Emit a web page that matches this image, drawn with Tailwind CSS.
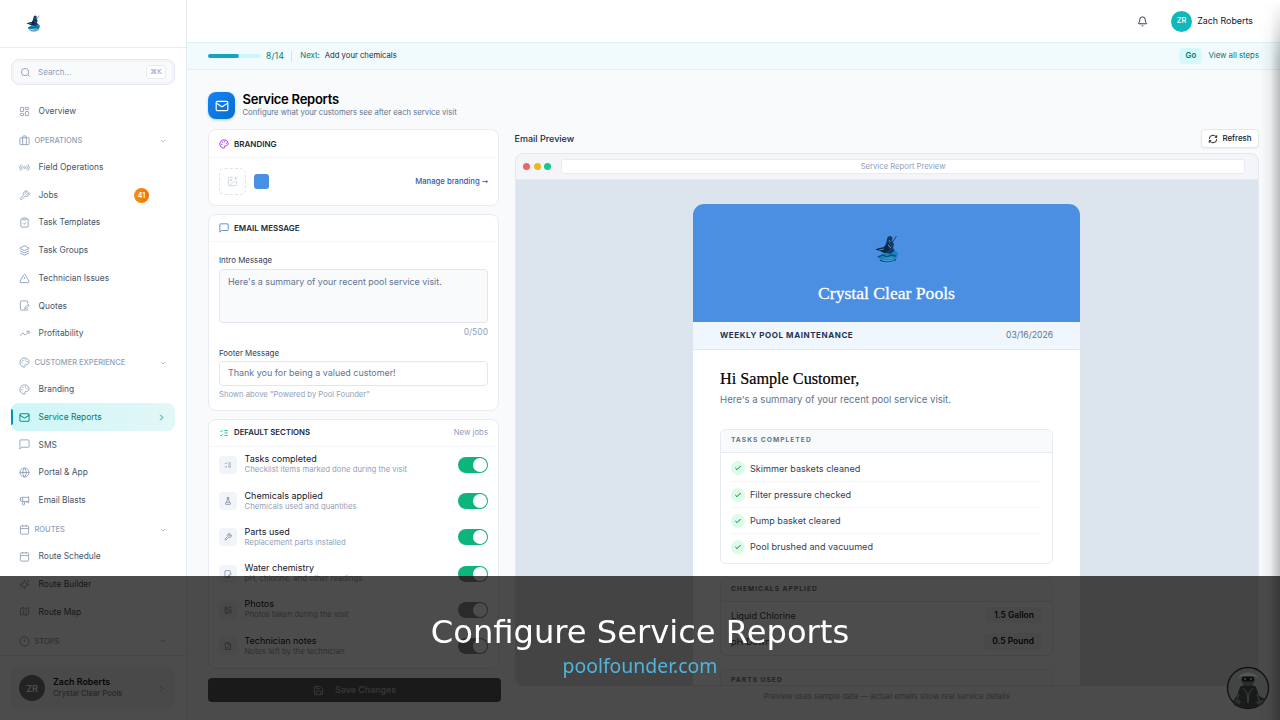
<!DOCTYPE html>
<html lang="en">
<head>
    <meta charset="UTF-8">
    <meta name="viewport" content="width=device-width, initial-scale=1.0">
    <title>Service Reports</title>
    <script src="https://cdn.jsdelivr.net/npm/@tailwindcss/browser@4"></script>
</head>
<body class="relative w-[1280px] h-[720px] overflow-hidden bg-[#f8fafc] font-['Inter',sans-serif] leading-none text-slate-900">

    <!-- Icon set -->
    <svg class="hidden">
        <symbol id="search" viewBox="0 0 24 24"><circle cx="11" cy="11" r="8"/><path d="m21 21-4.3-4.3"/></symbol>
        <symbol id="grid" viewBox="0 0 24 24"><rect x="3" y="3" width="7" height="9" rx="1"/><rect x="14" y="3" width="7" height="5" rx="1"/><rect x="14" y="12" width="7" height="9" rx="1"/><rect x="3" y="16" width="7" height="5" rx="1"/></symbol>
        <symbol id="case" viewBox="0 0 24 24"><rect x="2" y="6" width="20" height="15" rx="2"/><path d="M8 21V4a2 2 0 0 1 2-2h4a2 2 0 0 1 2 2v17"/></symbol>
        <symbol id="radio" viewBox="0 0 24 24"><path d="M4.9 19.1C1 15.2 1 8.8 4.9 4.9M7.8 16.2c-2.3-2.3-2.3-6.1 0-8.5M16.2 7.8c2.3 2.3 2.3 6.1 0 8.5M19.1 4.9C23 8.8 23 15.1 19.1 19"/><circle cx="12" cy="12" r="2"/></symbol>
        <symbol id="wrench" viewBox="0 0 24 24"><path d="M14.7 6.3a1 1 0 0 0 0 1.4l1.6 1.6a1 1 0 0 0 1.4 0l3.77-3.77a6 6 0 0 1-7.94 7.94l-6.91 6.91a2.12 2.12 0 0 1-3-3l6.91-6.91a6 6 0 0 1 7.94-7.94l-3.76 3.76z"/></symbol>
        <symbol id="clipboard" viewBox="0 0 24 24"><rect x="8" y="2" width="8" height="4" rx="1"/><path d="M16 4h2a2 2 0 0 1 2 2v14a2 2 0 0 1-2 2H6a2 2 0 0 1-2-2V6a2 2 0 0 1 2-2h2M9 14l2 2 4-4"/></symbol>
        <symbol id="layers" viewBox="0 0 24 24"><path d="M12.83 2.18a2 2 0 0 0-1.66 0L2.6 6.08a1 1 0 0 0 0 1.83l8.58 3.91a2 2 0 0 0 1.66 0l8.58-3.9a1 1 0 0 0 0-1.83ZM2 12.65l9.17 4.16a2 2 0 0 0 1.66 0L22 12.65M2 17.65l9.17 4.16a2 2 0 0 0 1.66 0L22 17.65"/></symbol>
        <symbol id="alert" viewBox="0 0 24 24"><path d="m21.73 18-8-14a2 2 0 0 0-3.46 0l-8 14A2 2 0 0 0 4 21h16a2 2 0 0 0 1.73-3M12 9v4M12 17h.01"/></symbol>
        <symbol id="quote" viewBox="0 0 24 24"><path d="M19 7.5V4a2 2 0 0 0-2-2H5a2 2 0 0 0-2 2v16a2 2 0 0 0 2 2h12a2 2 0 0 0 2-2v-1M21.4 10.6a2 2 0 0 0-3 0l-5 5-.9 3.5 3.5-.9 5-5a2 2 0 0 0 .4-2.6"/></symbol>
        <symbol id="trend" viewBox="0 0 24 24"><path d="M22 7l-8.5 8.5-5-5L2 17M16 7h6v6"/></symbol>
        <symbol id="palette" viewBox="0 0 24 24"><circle cx="13.5" cy="6.5" r=".6"/><circle cx="17.5" cy="10.5" r=".6"/><circle cx="8.5" cy="7.5" r=".6"/><circle cx="6.5" cy="12.5" r=".6"/><path d="M12 2C6.5 2 2 6.5 2 12s4.5 10 10 10c.93 0 1.65-.75 1.65-1.69 0-.44-.18-.83-.44-1.12-.29-.29-.44-.65-.44-1.13a1.64 1.64 0 0 1 1.67-1.67h2c3.05 0 5.55-2.5 5.55-5.55C21.97 6.01 17.46 2 12 2z"/></symbol>
        <symbol id="mail" viewBox="0 0 24 24"><rect x="2" y="4" width="20" height="16" rx="2"/><path d="m22 7-8.97 5.7a1.94 1.94 0 0 1-2.06 0L2 7"/></symbol>
        <symbol id="message" viewBox="0 0 24 24"><path d="M22 16a2 2 0 0 1-2 2H6l-4 4V4a2 2 0 0 1 2-2h16a2 2 0 0 1 2 2z"/></symbol>
        <symbol id="globe" viewBox="0 0 24 24"><circle cx="12" cy="12" r="10"/><path d="M12 2a14.5 14.5 0 0 0 0 20 14.5 14.5 0 0 0 0-20M2 12h20"/></symbol>
        <symbol id="megaphone" viewBox="0 0 24 24"><path d="M21 3v14M21 5H7a4 4 0 0 0 0 9h14M8 14v6a2 2 0 0 0 4 0v-5M21 17l-7-3M8 5v9M3 7v5"/></symbol>
        <symbol id="calendar" viewBox="0 0 24 24"><path d="M8 2v4M16 2v4M3 10h18"/><rect x="3" y="4" width="18" height="18" rx="2"/></symbol>
        <symbol id="sparkles" viewBox="0 0 24 24"><path d="M9.94 15.5A2 2 0 0 0 8.5 14.06l-6.14-1.58a.5.5 0 0 1 0-.96L8.5 9.94A2 2 0 0 0 9.94 8.5l1.58-6.14a.5.5 0 0 1 .96 0L14.06 8.5A2 2 0 0 0 15.5 9.94l6.14 1.58a.5.5 0 0 1 0 .96L15.5 14.06a2 2 0 0 0-1.44 1.44l-1.58 6.14a.5.5 0 0 1-.96 0zM20 3v4M22 5h-4M4 17v2M5 18H3"/></symbol>
        <symbol id="map" viewBox="0 0 24 24"><path d="M14.1 5.55a2 2 0 0 0 1.8 0l3.65-1.83A1 1 0 0 1 21 4.62v12.76a1 1 0 0 1-.55.9l-4.55 2.27a2 2 0 0 1-1.8 0l-4.2-2.1a2 2 0 0 0-1.8 0l-3.65 1.83A1 1 0 0 1 3 19.38V6.62a1 1 0 0 1 .55-.9l4.55-2.27a2 2 0 0 1 1.8 0zM15 5.76v15M9 3.24v15"/></symbol>
        <symbol id="clock" viewBox="0 0 24 24"><circle cx="12" cy="12" r="10"/><path d="M12 7v5M12 16h.01"/></symbol>
        <symbol id="down" viewBox="0 0 24 24"><path d="m6 9 6 6 6-6"/></symbol>
        <symbol id="right" viewBox="0 0 24 24"><path d="m9 18 6-6-6-6"/></symbol>
        <symbol id="bell" viewBox="0 0 24 24"><path d="M10.3 21a1.94 1.94 0 0 0 3.4 0M3.26 15.33A1 1 0 0 0 4 17h16a1 1 0 0 0 .74-1.67C19.41 13.96 18 12.5 18 8A6 6 0 0 0 6 8c0 4.5-1.41 5.96-2.74 7.33"/></symbol>
        <symbol id="refresh" viewBox="0 0 24 24"><path d="M3 12a9 9 0 0 1 9-9 9.75 9.75 0 0 1 6.74 2.74L21 8M21 3v5h-5M21 12a9 9 0 0 1-9 9 9.75 9.75 0 0 1-6.74-2.74L3 16M8 16H3v5"/></symbol>
        <symbol id="image" viewBox="0 0 24 24"><path d="M16 5h6M19 2v6M21 11.5V19a2 2 0 0 1-2 2H5a2 2 0 0 1-2-2V5a2 2 0 0 1 2-2h7.500M21 15l-3.1-3.1a2 2 0 0 0-2.8 0L6 21"/><circle cx="9" cy="9" r="2"/></symbol>
        <symbol id="list" viewBox="0 0 24 24"><path d="m3 17 2 2 4-4M3 7l2 2 4-4M13 6h8M13 12h8M13 18h8"/></symbol>
        <symbol id="flask" viewBox="0 0 24 24"><path d="M10 2v7.500L4.700 19.500A1.700 1.700 0 0 0 6.200 22h11.600a1.700 1.700 0 0 0 1.500-2.500L14 9.500V2M8.500 2h7M7 16h10"/></symbol>
        <symbol id="save" viewBox="0 0 24 24"><path d="M15.2 3a2 2 0 0 1 1.400.6l3.800 3.800a2 2 0 0 1 .6 1.400V19a2 2 0 0 1-2 2H5a2 2 0 0 1-2-2V5a2 2 0 0 1 2-2zM17 21v-7a1 1 0 0 0-1-1H8a1 1 0 0 0-1 1v7M7 3v4a1 1 0 0 0 1 1h7"/></symbol>
        <symbol id="note" viewBox="0 0 24 24"><path d="M14 2H6a2 2 0 0 0-2 2v16a2 2 0 0 0 2 2h12a2 2 0 0 0 2-2V8zM14 2v6h6M9 15l2 2 4-4"/></symbol>
        <symbol id="check" viewBox="0 0 24 24"><path d="M20 6 9 17l-5-5"/></symbol>
        <!-- Company mascot: caped figure riding a wave -->
        <symbol id="mascot" viewBox="0 0 24 29">
            <path fill="#123a66" d="M12 4 13 1.500l3-.5 1.500 2-.5 3 2 3-1 4 2.500 4-5 2-7-1-2-2L0 14.500l4-1.500 5-.5 2-4z"/>
            <path fill="#0c2747" d="M1 14.500 9 12l4-4 1 7-4 3z"/>
            <path fill="none" stroke="#173f63" stroke-width=".9" d="m17 8 4.500-7"/>
            <path fill="#1787b8" d="M4 20.500 10 18l5 1 5-3.500 3 2.500-1 5-6 2-10-.5-4-2z"/>
            <path fill="none" stroke="#0b4c7c" stroke-width="1.300" d="m3 22 5-2 4 2 4-2 5 1M5 25c4 3 11 3 16-.5"/>
            <path fill="none" stroke="#48b8d6" stroke-width=".8" d="m14 5 1.500 2M13 10l3 3M7 27c5 1.700 9 1 12-1M10 23h8M4 15l5-1"/>
        </symbol>
    </svg>

    <div class="flex h-full">

        <!-- Sidebar -->
        <aside class="flex w-[187px] shrink-0 flex-col border-r border-[#e6ebf1] bg-white text-[8.400px] text-slate-600">
            <div class="flex h-[48px] shrink-0 items-center border-b border-[#e9edf2] pl-[26px]">
                <svg class="h-[17px] w-[15px]"><use href="#mascot"/></svg>
            </div>
            <div class="px-[11px] pt-[11px]">
                <div class="flex h-[26px] items-center rounded-lg border border-[#e6ebf1] bg-[#f9fafc] pl-[8px] pr-[8px] text-slate-400 shadow-[inset_0_0_0_2px_#f3f5f8]">
                    <svg class="size-[11px] fill-none stroke-current stroke-2"><use href="#search"/></svg>
                    <span class="ml-[7px] text-[8px]">Search...</span>
                    <span class="ml-auto flex h-[14px] w-[20px] items-center justify-center rounded-[3px] border border-[#e6ebf1] bg-white font-['DejaVu_Sans',sans-serif] text-[7px]">⌘K</span>
                </div>
            </div>

            <nav class="flex flex-col px-[11px] pt-[12.400px] [&_a]:flex [&_a]:h-[27.7px] [&_a]:shrink-0 [&_a]:items-center [&_a]:gap-[8.600px] [&_a]:pl-[8px] [&_a>svg]:size-[11px] [&_svg]:shrink-0 [&_svg]:fill-none [&_svg]:stroke-slate-400 [&_svg]:stroke-2 [&_h3]:flex [&_h3]:h-[28.400px] [&_h3]:shrink-0 [&_h3]:items-center [&_h3]:gap-[4.500px] [&_h3]:pt-[3px] [&_h3]:pl-[8px] [&_h3]:pr-[8px] [&_h3]:text-[7.500px] [&_h3]:font-medium [&_h3]:text-slate-400">
                <a><svg><use href="#grid"/></svg>Overview</a>
                <h3><svg class="size-[11px]"><use href="#case"/></svg>OPERATIONS<svg class="ml-auto size-[8px]"><use href="#down"/></svg></h3>
                <a><svg><use href="#radio"/></svg>Field Operations</a>
                <a><svg><use href="#wrench"/></svg>Jobs<span class="ml-auto mr-[26px] flex size-[15px] items-center justify-center rounded-full bg-gradient-to-r from-[#f0930c] to-[#f27108] text-[7px] font-semibold text-white">41</span></a>
                <a><svg><use href="#clipboard"/></svg>Task Templates</a>
                <a><svg><use href="#layers"/></svg>Task Groups</a>
                <a><svg><use href="#alert"/></svg>Technician Issues</a>
                <a><svg><use href="#quote"/></svg>Quotes</a>
                <a><svg><use href="#trend"/></svg>Profitability</a>
                <h3><svg class="size-[11px]"><use href="#palette"/></svg>CUSTOMER EXPERIENCE<svg class="ml-auto size-[8px]"><use href="#down"/></svg></h3>
                <a><svg><use href="#palette"/></svg>Branding</a>
                <a class="relative rounded-lg bg-gradient-to-r from-[#cdf6f8] to-[#e3f7f7] text-teal-700 [&>svg]:stroke-teal-600! before:absolute before:left-0 before:top-[6px] before:h-[16px] before:w-[2px] before:rounded-r before:bg-cyan-600"><svg class="stroke-[2.200]!"><use href="#mail"/></svg>Service Reports<svg class="mr-[8px] ml-auto"><use href="#right"/></svg></a>
                <a><svg><use href="#message"/></svg>SMS</a>
                <a><svg><use href="#globe"/></svg>Portal &amp; App</a>
                <a><svg><use href="#megaphone"/></svg>Email Blasts</a>
                <h3><svg class="size-[11px]"><use href="#calendar"/></svg>ROUTES<svg class="ml-auto size-[8px]"><use href="#down"/></svg></h3>
                <a><svg><use href="#calendar"/></svg>Route Schedule</a>
                <a><svg><use href="#sparkles"/></svg>Route Builder</a>
                <a><svg><use href="#map"/></svg>Route Map</a>
                <h3><svg class="size-[11px]"><use href="#clock"/></svg>STOPS<svg class="ml-auto size-[8px]"><use href="#down"/></svg></h3>
            </nav>

            <div class="mt-auto border-t border-[#e9edf2] px-[11px] pt-[11px] pb-[11px]">
                <div class="flex h-[42px] items-center rounded-lg bg-slate-100 px-[8px]">
                    <div class="flex size-[26px] items-center justify-center rounded-full bg-teal-600 text-[9px] font-semibold text-white">ZR</div>
                    <div class="ml-[8px]">
                        <div class="text-[8.900px] font-semibold text-slate-900">Zach Roberts</div>
                        <div class="mt-[3px] text-[7.700px] text-slate-500">Crystal Clear Pools</div>
                    </div>
                    <svg class="ml-auto size-[11px] fill-none stroke-slate-400 stroke-2"><use href="#right"/></svg>
                </div>
            </div>
        </aside>

        <!-- Main column -->
        <main class="flex min-w-0 flex-1 flex-col">
            <header class="flex h-[42px] shrink-0 items-center justify-end bg-white pr-[27px]">
                <svg class="size-[11px] fill-none stroke-slate-800 stroke-2"><use href="#bell"/></svg>
                <div class="ml-[23px] flex size-[21px] items-center justify-center rounded-full bg-[#0fb8bb] text-[7.500px] font-medium text-white">ZR</div>
                <span class="ml-[5px] text-[8.900px]">Zach Roberts</span>
            </header>

            <!-- Setup progress -->
            <div class="flex h-[28px] shrink-0 items-center border-y border-[#dcf0f6] bg-[#f1fbfe] pl-[21px] pr-[21px] text-[7.800px] text-teal-700">
                <div class="h-[4px] w-[53px] rounded-full bg-[#cff5fa]"><div class="h-full w-[31px] rounded-full bg-[#12a5bd]"></div></div>
                <span class="ml-[5px] text-[8.300px] tracking-[0.350px]">8/14</span>
                <span class="ml-[7px] h-[11px] w-px bg-[#c9e9f0]"></span>
                <span class="ml-[8px]">Next:</span>
                <span class="ml-[5px] text-[7.700px] text-slate-800">Add your chemicals</span>
                <span class="ml-auto flex h-[16px] w-[23px] items-center justify-center rounded bg-[#d6f9fc] font-semibold">Go</span>
                <span class="ml-[6px]">View all steps</span>
            </div>

            <div class="flex flex-1 flex-col pt-[22px] pl-[21px] pr-[21px]">
                <div class="flex h-[27px] shrink-0">
                    <div class="flex size-[27px] items-center justify-center rounded-lg bg-gradient-to-br from-[#1682f5] to-[#076fcf] shadow-sm shadow-blue-500/30">
                        <svg class="size-[14px] fill-none stroke-white stroke-2"><use href="#mail"/></svg>
                    </div>
                    <div class="ml-[7.500px]">
                        <h1 class="mt-[1px] text-[13px] font-semibold tracking-[-0.250px] text-black">Service Reports</h1>
                        <p class="mt-[3px] text-[7.700px] text-slate-500">Configure what your customers see after each service visit</p>
                    </div>
                </div>

                <div class="flex flex-1 gap-[15.500px] pt-[10px]">

                    <!-- Settings -->
                    <div class="flex w-[291px] shrink-0 flex-col gap-[8px]">
                        <section class="h-[77px] shrink-0 rounded-lg border border-[#e8ecf1] bg-white">
                            <h2 class="flex h-[28px] items-center gap-[5px] border-b border-[#f4f6f9] px-[10px] text-[8px] font-semibold text-slate-800"><svg class="size-[10px] fill-none stroke-purple-600 stroke-2"><use href="#palette"/></svg>BRANDING</h2>
                            <div class="flex h-[47px] items-center px-[10px]">
                                <div class="flex size-[27px] items-center justify-center rounded-md border border-dashed border-[#dde2e8]"><svg class="size-[11px] fill-none stroke-slate-300 stroke-2"><use href="#image"/></svg></div>
                                <div class="ml-[8px] size-[15px] rounded-[3px] bg-[#4a8fe2]"></div>
                                <a class="ml-auto text-[7.700px] font-medium text-[#2c5cad]">Manage branding <span class="font-['DejaVu_Sans',sans-serif] text-[7.500px]">→</span></a>
                            </div>
                        </section>

                        <section class="h-[197px] shrink-0 rounded-lg border border-[#e8ecf1] bg-white text-[7.900px]">
                            <h2 class="flex h-[27px] items-center gap-[5px] border-b border-[#f4f6f9] px-[10px] text-[8px] font-semibold text-slate-800"><svg class="size-[10px] fill-none stroke-[#4280c8] stroke-2"><use href="#message"/></svg>EMAIL MESSAGE</h2>
                            <div class="flex flex-col px-[10px] pt-[15px]">
                                <label class="h-[8px] text-slate-700">Intro Message</label>
                                <div class="mt-[4px] h-[53.500px] rounded-[4px] border border-[#e2e7ed] bg-[#f8fafc] px-[8px] pt-[7.500px] text-[8.900px] text-slate-500">Here's a summary of your recent pool service visit.</div>
                                <div class="mt-[5px] h-[8px] text-right text-[8.500px] text-slate-400">0/500</div>
                                <label class="mt-[14px] h-[8px] text-slate-700">Footer Message</label>
                                <div class="mt-[3.500px] flex h-[25px] items-center rounded-[4px] border border-[#e2e7ed] px-[8px] text-[8.950px] text-slate-500">Thank you for being a valued customer!</div>
                                <div class="mt-[5px] text-[7.650px] text-slate-400">Shown above "Powered by Pool Founder"</div>
                            </div>
                        </section>

                        <section class="h-[250px] shrink-0 rounded-lg border border-[#e8ecf1] bg-white">
                            <h2 class="flex h-[26.500px] items-center gap-[5px] border-b border-[#f4f6f9] px-[10px] text-[7.800px] font-semibold text-slate-800"><svg class="size-[10px] fill-none stroke-emerald-500 stroke-2"><use href="#list"/></svg>DEFAULT SECTIONS<span class="ml-auto font-normal text-slate-400">New jobs</span></h2>
                            <div class="px-[10px] [&>div]:flex [&>div]:h-[36.300px] [&>div]:items-center [&>div>svg]:size-[18px] [&>div>svg]:rounded [&>div>svg]:bg-slate-100 [&>div>svg]:p-[5px] [&>div>svg]:fill-none [&>div>svg]:stroke-slate-500 [&>div>svg]:stroke-2 [&>div>p]:ml-[7.500px] [&>div>p]:-mt-px [&>div>p]:text-[9px] [&>div>p]:text-slate-900 [&_small]:mt-[3px] [&_small]:block [&_small]:text-[7.750px] [&_small]:text-slate-400 [&_i]:ml-auto [&_i]:flex [&_i]:h-[16px] [&_i]:w-[30px] [&_i]:justify-end [&_i]:rounded-full [&_i]:bg-[#0bb57c] [&_i]:p-px [&_b]:size-[14px] [&_b]:rounded-full [&_b]:bg-white">
                                <div><svg><use href="#list"/></svg><p>Tasks completed<small>Checklist items marked done during the visit</small></p><i><b></b></i></div>
                                <div><svg><use href="#flask"/></svg><p>Chemicals applied<small>Chemicals used and quantities</small></p><i><b></b></i></div>
                                <div><svg><use href="#wrench"/></svg><p>Parts used<small>Replacement parts installed</small></p><i><b></b></i></div>
                                <div><svg><use href="#quote"/></svg><p>Water chemistry<small>pH, chlorine, and other readings</small></p><i><b></b></i></div>
                                <div><svg><use href="#image"/></svg><p>Photos<small>Photos taken during the visit</small></p><i><b></b></i></div>
                                <div><svg><use href="#note"/></svg><p>Technician notes<small>Notes left by the technician</small></p><i><b></b></i></div>
                            </div>
                        </section>

                        <button class="mt-[1px] flex h-[24px] w-[293px] shrink-0 items-center justify-center gap-[11px] rounded-[4px] bg-[#0b6b80] text-[8.900px] font-medium text-white/60">
                            <svg class="size-[11px] fill-none stroke-current stroke-2"><use href="#save"/></svg>Save Changes
                        </button>
                    </div>

                    <!-- Email preview -->
                    <div class="flex min-w-0 flex-1 flex-col">
                        <div class="flex h-[19px] shrink-0 items-center justify-between">
                            <h2 class="text-[9px] font-medium text-slate-800">Email Preview</h2>
                            <button class="flex h-[19px] w-[58px] items-center justify-center gap-[4px] rounded-[4px] border border-slate-200 bg-white text-[7.900px] font-medium shadow-xs"><svg class="size-[10px] fill-none stroke-black stroke-2"><use href="#refresh"/></svg>Refresh</button>
                        </div>
                        <div class="mt-[5px] flex h-[533px] shrink-0 flex-col overflow-hidden rounded-lg border border-[#e4e9ef] bg-[#dce4ee]">
                            <div class="flex h-[26px] shrink-0 items-center gap-[3.700px] border-b border-[#e8ecf1] bg-[#f3f5f8] pl-[7.500px] pr-[13px]">
                                <span class="size-[7px] rounded-full bg-[#ee6464]"></span>
                                <span class="size-[7px] rounded-full bg-[#f3b51b]"></span>
                                <span class="size-[7px] rounded-full bg-[#15c88c]"></span>
                                <div class="ml-[6px] flex h-[15px] flex-1 items-center justify-center rounded-[3px] border border-[#e8ecf1] bg-white text-[7.700px] text-slate-400">Service Report Preview</div>
                            </div>
                            <article class="mt-[24px] ml-[177.500px] w-[387px] shrink-0 overflow-hidden rounded-t-[11px] bg-white">
                                <div class="flex h-[118px] flex-col items-center bg-[#4a8fe2] pt-[31px]">
                                    <svg class="h-[29px] w-[24px]"><use href="#mascot"/></svg>
                                    <div class="mt-[20.500px] font-['Liberation_Serif',serif] text-[17.600px] text-white [-webkit-text-stroke:0.3px_white]">Crystal Clear Pools</div>
                                </div>
                                <div class="flex h-[27.500px] items-center justify-between border-b border-slate-200 bg-[#eff6fd] px-[27px]">
                                    <span class="text-[8px] font-bold tracking-[0.570px] text-[#1e3350]">WEEKLY POOL MAINTENANCE</span>
                                    <span class="text-[8.600px] text-slate-500">03/16/2026</span>
                                </div>
                                <div class="px-[27px] pt-[21px]">
                                    <div class="font-['Liberation_Serif',serif] text-[16.200px] text-black [-webkit-text-stroke:0.2px_black]">Hi Sample Customer,</div>
                                    <p class="mt-[8px] h-[10px] text-[9.600px] text-slate-500">Here's a summary of your recent pool service visit.</p>
                                    <div class="mt-[24px] h-[135px] overflow-hidden rounded-md border border-[#e6ebf1]">
                                        <h4 class="flex h-[23px] items-center border-b border-[#e6ebf1] bg-slate-50 px-[10px] text-[6.700px] font-bold tracking-[1px] text-slate-500">TASKS COMPLETED</h4>
                                        <ul class="px-[10px] pt-[2.500px] [&>li]:flex [&>li]:h-[26px] [&>li]:items-center [&>li]:gap-[5px] [&>li]:text-[9.100px] [&>li]:text-slate-700 [&>li+li]:border-t [&>li+li]:border-[#f4f6f9] [&_svg]:size-[14px] [&_svg]:rounded-full [&_svg]:bg-[#dcfce7] [&_svg]:p-[3px] [&_svg]:fill-none [&_svg]:stroke-green-700 [&_svg]:stroke-3">
                                            <li><svg><use href="#check"/></svg>Skimmer baskets cleaned</li>
                                            <li><svg><use href="#check"/></svg>Filter pressure checked</li>
                                            <li><svg><use href="#check"/></svg>Pump basket cleared</li>
                                            <li><svg><use href="#check"/></svg>Pool brushed and vacuumed</li>
                                        </ul>
                                    </div>
                                    <div class="mt-[14px] h-[78px] overflow-hidden rounded-md border border-[#e6ebf1] text-[9.100px] text-slate-700">
                                        <h4 class="flex h-[23px] items-center border-b border-[#e6ebf1] bg-slate-50 px-[10px] text-[6.700px] font-bold tracking-[1px] text-slate-500">CHEMICALS APPLIED</h4>
                                        <div class="flex h-[27px] items-center justify-between px-[10px]">Liquid Chlorine<span class="rounded bg-slate-100 px-[8px] py-[4px] text-[8.500px] font-semibold text-slate-900">1.5 Gallon</span></div>
                                        <div class="flex h-[26px] items-center justify-between px-[10px]">pH Down<span class="rounded bg-slate-100 px-[8px] py-[4px] text-[8.500px] font-semibold text-slate-900">0.5 Pound</span></div>
                                    </div>
                                    <div class="mt-[13px] h-[60px] overflow-hidden rounded-md border border-[#e6ebf1]">
                                        <h4 class="flex h-[23px] items-center border-b border-[#e6ebf1] bg-slate-50 px-[10px] text-[6.700px] font-bold tracking-[1px] text-slate-500">PARTS USED</h4>
                                    </div>
                                </div>
                            </article>
                        </div>
                        <p class="mt-[7px] text-center text-[7.700px] text-slate-400">Preview uses sample data — actual emails show real service details</p>
                    </div>
                </div>
            </div>
        </main>
    </div>

    <!-- Shadow along the right edge -->
    <div class="absolute top-0 right-0 h-full w-[20px] bg-gradient-to-r from-transparent via-black/5 to-black/25 [mask-image:linear-gradient(to_bottom,transparent,black_60px)]"></div>

    <!-- Caption banner -->
    <div class="absolute inset-x-0 bottom-0 flex h-[144px] flex-col items-center bg-black/70 pt-[40px] backdrop-grayscale">
        <div class="font-['DejaVu_Sans',sans-serif] text-[32.150px]">
            <span class="text-white">Configure Service Reports</span>
        </div>
        <div class="mt-[8px] font-['Noto_Sans',sans-serif] text-[19.400px] text-[#4fb4dd]">poolfounder.com</div>
    </div>

    <!-- Assistant bubble -->
    <svg class="absolute top-[666px] left-[1226px] size-[44px]" viewBox="0 0 44 44">
        <circle cx="22" cy="22" r="20.500" fill="#434544" stroke="#111" stroke-width="1.300"/>
        <path fill="#191b1a" d="M14 21c4-3 12-3 16 0l3 9 6 3-2 5c-8 5-22 5-29 1l-1-4 4-5z"/>
        <ellipse cx="22" cy="14" rx="7" ry="6" fill="#2b2d2c"/>
        <path fill="#565857" d="M12 12c3-7 17-7 20 0l-4-2H16z"/>
        <rect x="16" y="11" width="12" height="4.500" rx="2" fill="#0d0e0e"/>
        <path stroke="#666" d="M18 13h2M24 13h2"/>
        <path fill="none" stroke="#3c3e3d" d="m17 22 4 5 1 10 1-10 4-5M13 28l-2 6M31 28l2 6"/>
        <path fill="#2d2f2e" d="M8 35c2-3 6-2 7 1l-2 3zM30 37c1-4 6-4 8-2l-4 4z"/>
    </svg>

</body>
</html>
